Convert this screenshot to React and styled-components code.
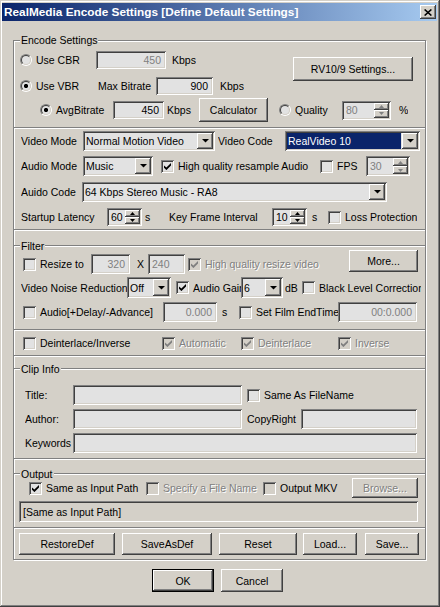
import styled, { createGlobalStyle, css } from "styled-components";

const FACE = "#d4d0c8";
const FIELD = "#e2e2e2";
const NAVY = "#0a246a";

const Global = createGlobalStyle`
  html, body { margin: 0; padding: 0; background: ${FACE}; }
  body { font-family: "Liberation Sans", Arial, sans-serif; }
`;

const raised = css`
  box-shadow: inset -1px -1px #404040, inset 1px 1px #fff, inset -2px -2px #808080;
`;
const sunken = css`
  box-shadow: inset 1px 1px #808080, inset -1px -1px #fff, inset 2px 2px #404040,
    inset -2px -2px ${FACE};
`;
const embossed = css`
  color: #808080;
  text-shadow: 1px 1px #fff;
`;

const Window = styled.div`
  width: 440px;
  height: 607px;
  box-sizing: border-box;
  padding: 3px 3px 3px 2px;
  background: ${FACE};
  box-shadow: inset -1px -1px #404040, inset 1px 1px ${FACE}, inset -2px -2px #808080,
    inset 2px 2px #fff;
  display: flex;
  flex-direction: column;
  color: #000;
  font-family: "Liberation Sans", Arial, sans-serif;
  font-size: 10.5px;
`;

const TitleBar = styled.div`
  flex: none;
  height: 18px;
  display: flex;
  align-items: center;
  justify-content: space-between;
  padding: 0 1px 0 2px;
  background: linear-gradient(to right, ${NAVY}, #a6caf0);
`;

const Caption = styled.span`
  color: #fff;
  font-weight: bold;
  font-size: 11.8px;
  white-space: nowrap;
`;

const CloseButton = styled.button`
  flex: none;
  width: 16px;
  height: 14px;
  padding: 0;
  border: none;
  background: ${FACE};
  ${raised};
  display: flex;
  align-items: center;
  justify-content: center;
`;

const Frame = styled.div`
  position: relative;
  flex: none;
  width: 413px;
  box-sizing: border-box;
  margin: 19px 0 0 11px;
  border: 1px solid #808080;
  box-shadow: inset 1px 1px #fff, 1px 1px #fff;
  display: flex;
  flex-direction: column;
`;

const FrameLegend = styled.span`
  position: absolute;
  top: -7px;
  left: 6px;
  padding: 0 1px;
  line-height: 13px;
  background: ${FACE};
`;

const Section = styled.div`
  display: flex;
  flex-direction: column;
  padding-top: ${(p) => p.$pt || 0}px;
  padding-bottom: ${(p) => p.$pb || 0}px;
  ${(p) =>
    p.$divider &&
    css`
      border-top: 1px solid #808080;
      box-shadow: inset 0 1px #fff;
    `}
`;

const GroupTitle = styled.div`
  display: flex;
  align-items: center;
  height: 14px;
  margin-top: ${(p) => p.$mt || 0}px;
`;

const Etch = styled.span`
  height: 0;
  border-top: 1px solid #808080;
  border-bottom: 1px solid #fff;
  flex: ${(p) => (p.$w ? `0 0 ${p.$w}px` : "1")};
`;

const GroupText = styled.span`
  padding: 0 1px;
  line-height: 13px;
`;

const EncodeTop = styled.div`
  display: flex;
  align-items: flex-start;
`;

const EncodeRows = styled.div`
  width: 279px;
  padding-top: 10px;
  display: flex;
  flex-direction: column;
`;

const Row = styled.div`
  display: flex;
  align-items: center;
  height: ${(p) => p.$h || 20}px;
  padding-left: ${(p) => p.$pl || 0}px;
  margin-top: ${(p) => p.$mt || 0}px;
`;

const Label = styled.span`
  flex: none;
  width: ${(p) => (p.$w ? `${p.$w}px` : "auto")};
  margin-left: ${(p) => p.$ml || 0}px;
  white-space: nowrap;
  overflow: hidden;
  ${(p) => p.$disabled && embossed}
`;

const Field = styled.div`
  flex: none;
  box-sizing: border-box;
  width: ${(p) => p.$w}px;
  height: ${(p) => p.$h || 20}px;
  margin-left: ${(p) => p.$ml || 0}px;
  padding: 0 5px 0 4px;
  background: ${(p) => (p.$plain ? FACE : FIELD)};
  ${sunken};
  display: flex;
  align-items: center;
  justify-content: ${(p) => (p.$right ? "flex-end" : "flex-start")};
  color: ${(p) => (p.$disabled ? "#808080" : "#000")};
  white-space: nowrap;
  overflow: hidden;
`;

const ComboBox = styled.div`
  flex: none;
  box-sizing: border-box;
  width: ${(p) => p.$w}px;
  height: ${(p) => p.$h || 20}px;
  padding: 2px;
  background: ${FIELD};
  ${sunken};
  display: flex;
  align-items: stretch;
`;

const ComboText = styled.span`
  flex: 1;
  display: flex;
  align-items: center;
  padding-left: 1px;
  white-space: nowrap;
  overflow: hidden;
  ${(p) =>
    p.$selected &&
    css`
      background: ${NAVY};
      color: #fff;
      margin-right: 1px;
    `}
`;

const DropBtn = styled.span`
  flex: none;
  width: 16px;
  background: ${FACE};
  ${raised};
  display: flex;
  align-items: center;
  justify-content: center;
`;

const SpinField = styled(ComboBox)`
  padding-left: 4px;
`;

const SpinText = styled.span`
  flex: 1;
  display: flex;
  align-items: center;
  color: ${(p) => (p.$disabled ? "#808080" : "#000")};
`;

const SpinCol = styled.span`
  flex: none;
  width: 15px;
  display: flex;
  flex-direction: column;
`;

const SpinBtn = styled.span`
  flex: 1;
  background: ${FACE};
  ${raised};
  display: flex;
  align-items: center;
  justify-content: center;
`;

const Choice = styled.div`
  flex: none;
  display: flex;
  align-items: center;
  width: ${(p) => (p.$w ? `${p.$w}px` : "auto")};
  margin-left: ${(p) => p.$ml || 0}px;
  white-space: nowrap;
  overflow: hidden;
`;

const ChoiceText = styled.span`
  margin-left: 4px;
  ${(p) => p.$disabled && embossed}
`;

const Box = styled.span`
  flex: none;
  width: 13px;
  height: 13px;
  box-sizing: border-box;
  background: ${(p) => (p.$dim ? FACE : FIELD)};
  ${sunken};
  display: flex;
  align-items: center;
  justify-content: center;
`;

const RadioRing = styled.span`
  flex: none;
  width: 12px;
  height: 12px;
  box-sizing: border-box;
  border-radius: 50%;
  border: 1px solid;
  border-color: #808080 #fff #fff #808080;
  display: flex;
`;

const RadioDot = styled.span`
  flex: 1;
  border-radius: 50%;
  border: 1px solid;
  border-color: #404040 ${FACE} ${FACE} #404040;
  background: ${(p) =>
    p.$on ? `radial-gradient(circle, #000 0 1.9px, ${FIELD} 2.3px)` : FIELD};
`;

const Button = styled.button`
  flex: none;
  box-sizing: border-box;
  width: ${(p) => p.$w}px;
  height: ${(p) => p.$h || 22}px;
  margin: ${(p) => p.$mt || 0}px 0 0 ${(p) => p.$ml || 0}px;
  padding: 0;
  border: ${(p) => (p.$default ? "1px solid #000" : "none")};
  background: ${FACE};
  ${raised};
  font: inherit;
  color: #000;
  white-space: nowrap;
  ${(p) => p.disabled && embossed}
`;

const Footer = styled.div`
  display: flex;
  margin-top: 9px;
  padding-left: 150px;
`;

const CloseGlyph = () => (
  <svg width="8" height="7" viewBox="0 0 8 7">
    <path d="M0.6 0.5 L7.4 6.5 M7.4 0.5 L0.6 6.5" stroke="#000" strokeWidth="1.6" />
  </svg>
);

const DownArrow = ({ color = "#000" }) => (
  <svg width="7" height="4" viewBox="0 0 7 4">
    <polygon points="0,0 7,0 3.5,3.6" fill={color} />
  </svg>
);

const TinyArrow = ({ up, color }) => (
  <svg width="5" height="3" viewBox="0 0 5 3">
    <polygon points={up ? "2.5,0 5,3 0,3" : "0,0 5,0 2.5,3"} fill={color} />
  </svg>
);

const CheckMark = ({ color }) => (
  <svg width="7" height="7" viewBox="0 0 7 7">
    <polygon points="0,2.4 2.4,4.6 7,0 7,2.6 2.4,7.1 0,4.8" fill={color} />
  </svg>
);

const Radio = ({ label, checked, w, ml }) => (
  <Choice $w={w} $ml={ml}>
    <RadioRing>
      <RadioDot $on={checked} />
    </RadioRing>
    <ChoiceText>{label}</ChoiceText>
  </Choice>
);

const Check = ({ label, checked, disabled, dim, w, ml }) => (
  <Choice $w={w} $ml={ml}>
    <Box $dim={disabled || dim}>
      {checked && <CheckMark color={disabled ? "#808080" : "#000"} />}
    </Box>
    <ChoiceText $disabled={disabled}>{label}</ChoiceText>
  </Choice>
);

const Combo = ({ w, h, value, selected }) => (
  <ComboBox $w={w} $h={h}>
    <ComboText $selected={selected}>{value}</ComboText>
    <DropBtn>
      <DownArrow />
    </DropBtn>
  </ComboBox>
);

const Spin = ({ w, h, value, disabled }) => {
  const arrow = disabled ? "#808080" : "#000";
  return (
    <SpinField $w={w} $h={h}>
      <SpinText $disabled={disabled}>{value}</SpinText>
      <SpinCol>
        <SpinBtn>
          <TinyArrow up color={arrow} />
        </SpinBtn>
        <SpinBtn>
          <TinyArrow color={arrow} />
        </SpinBtn>
      </SpinCol>
    </SpinField>
  );
};

const GroupLegend = ({ title, mt }) => (
  <GroupTitle $mt={mt}>
    <Etch $w={6} />
    <GroupText>{title}</GroupText>
    <Etch />
  </GroupTitle>
);

export default function App() {
  return (
    <>
      <Global />
      <Window>
        <TitleBar>
          <Caption>RealMedia Encode Settings [Define Default Settings]</Caption>
          <CloseButton aria-label="Close">
            <CloseGlyph />
          </CloseButton>
        </TitleBar>

        <Frame>
          <FrameLegend>Encode Settings</FrameLegend>

          <Section $pb={8}>
            <EncodeTop>
              <EncodeRows>
                <Row $h={18} $pl={6}>
                  <Radio w={76} label="Use CBR" />
                  <Field $w={70} $h={18} $right $disabled>450</Field>
                  <Label $ml={6}>Kbps</Label>
                </Row>
                <Row $h={18} $pl={6} $mt={8}>
                  <Radio w={78} label="Use VBR" checked />
                  <Label $w={58}>Max Bitrate</Label>
                  <Field $w={57} $h={18} $right>900</Field>
                  <Label $ml={7}>Kbps</Label>
                </Row>
              </EncodeRows>
              <Button $w={120} $h={24} $mt={16}>RV10/9 Settings...</Button>
            </EncodeTop>
            <Row $h={18} $pl={26} $mt={6}>
              <Radio w={73} label="AvgBitrate" checked />
              <Field $w={51} $h={18} $right>450</Field>
              <Label $ml={3} $w={32}>Kbps</Label>
              <Button $w={69} $h={24}>Calculator</Button>
              <Radio w={63} ml={11} label="Quality" />
              <Spin w={49} h={19} value="80" disabled />
              <Label $ml={8}>%</Label>
            </Row>
          </Section>

          <Section $divider $pt={3} $pb={2}>
            <Row $pl={7}>
              <Label $w={62}>Video Mode</Label>
              <Combo w={132} value="Normal Motion Video" />
              <Label $ml={3} $w={67}>Video Code</Label>
              <Combo w={135} value="RealVideo 10" selected />
            </Row>
            <Row $pl={7} $mt={5}>
              <Label $w={62}>Audio Mode</Label>
              <Combo w={70} value="Music" />
              <Check ml={8} w={159} checked label="High quality resample Audio" />
              <Check w={46} label="FPS" />
              <Spin w={44} value="30" disabled />
            </Row>
            <Row $pl={7} $mt={6}>
              <Label $w={61}>Auido Code</Label>
              <Combo w={305} value="64 Kbps Stereo Music - RA8" />
            </Row>
            <Row $pl={7} $mt={5}>
              <Label $w={86}>Startup Latency</Label>
              <Spin w={35} h={18} value="60" />
              <Label $ml={3} $w={24}>s</Label>
              <Label $w={103}>Key Frame Interval</Label>
              <Spin w={35} h={18} value="10" />
              <Label $ml={5} $w={16}>s</Label>
              <Check label="Loss Protection" />
            </Row>
          </Section>

          <Section $divider $pb={7}>
            <GroupLegend title="Filter" mt={9} />
            <Row $pl={9} $mt={1}>
              <Check w={68} label="Resize to" />
              <Field $w={39} $right $disabled>320</Field>
              <Label $ml={7} $w={11}>X</Label>
              <Field $w={37} $disabled>240</Field>
              <Check ml={3} w={161} checked disabled label="High quality resize video" />
              <Button $w={69} $h={22} $mt={-6}>More...</Button>
            </Row>
            <Row $pl={7} $h={21} $mt={3}>
              <Label $w={106}>Video Noise Reduction</Label>
              <Combo w={44} h={21} value="Off" />
              <Check ml={5} w={65} checked label="Audio Gain" />
              <Combo w={42} h={21} value="6" />
              <Label $ml={2} $w={17}>dB</Label>
              <Check w={119} label="Black Level Correction" />
            </Row>
            <Row $pl={9} $mt={4}>
              <Check w={140} label="Audio[+Delay/-Advance]" />
              <Field $w={54} $right $disabled>0.000</Field>
              <Label $ml={5} $w={17}>s</Label>
              <Check w={99} label="Set Film EndTime" />
              <Field $w={79} $right $disabled>00:0.000</Field>
            </Row>
          </Section>

          <Section $divider $pt={3} $pb={2}>
            <Row $pl={9}>
              <Check w={139} label="Deinterlace/Inverse" />
              <Check w={79} checked disabled label="Automatic" />
              <Check w={97} checked disabled label="Deinterlace" />
              <Check checked disabled label="Inverse" />
            </Row>
          </Section>

          <Section $divider $pb={5}>
            <GroupLegend title="Clip Info" mt={6} />
            <Row $pl={11} $mt={9}>
              <Label $w={48}>Title:</Label>
              <Field $w={169} />
              <Check ml={5} label="Same As FileName" />
            </Row>
            <Row $pl={11} $mt={4}>
              <Label $w={48}>Author:</Label>
              <Field $w={169} />
              <Label $ml={5} $w={54}>CopyRight</Label>
              <Field $w={116} />
            </Row>
            <Row $pl={11} $mt={4}>
              <Label $w={48}>Keywords</Label>
              <Field $w={344} />
            </Row>
          </Section>

          <Section $divider $pb={5}>
            <GroupLegend title="Output" mt={8} />
            <Row $pl={15} $mt={-3}>
              <Check w={117} checked label="Same as Input Path" />
              <Check w={117} disabled label="Specify a File Name" />
              <Check w={89} dim label="Output MKV" />
              <Button $w={66} $h={20} disabled>
                Browse...
              </Button>
            </Row>
            <Row $pl={5} $h={21} $mt={3}>
              <Field $w={399} $h={21} $plain>
                [Same as Input Path]
              </Field>
            </Row>
          </Section>

          <Section $divider $pt={5} $pb={4}>
            <Row $pl={5} $h={22}>
              <Button $w={96}>RestoreDef</Button>
              <Button $w={90} $ml={7}>SaveAsDef</Button>
              <Button $w={78} $ml={7}>Reset</Button>
              <Button $w={54} $ml={6}>Load...</Button>
              <Button $w={54} $ml={8}>Save...</Button>
            </Row>
          </Section>
        </Frame>

        <Footer>
          <Button $w={62} $h={23} $default>
            OK
          </Button>
          <Button $w={62} $h={23} $ml={7}>
            Cancel
          </Button>
        </Footer>
      </Window>
    </>
  );
}
